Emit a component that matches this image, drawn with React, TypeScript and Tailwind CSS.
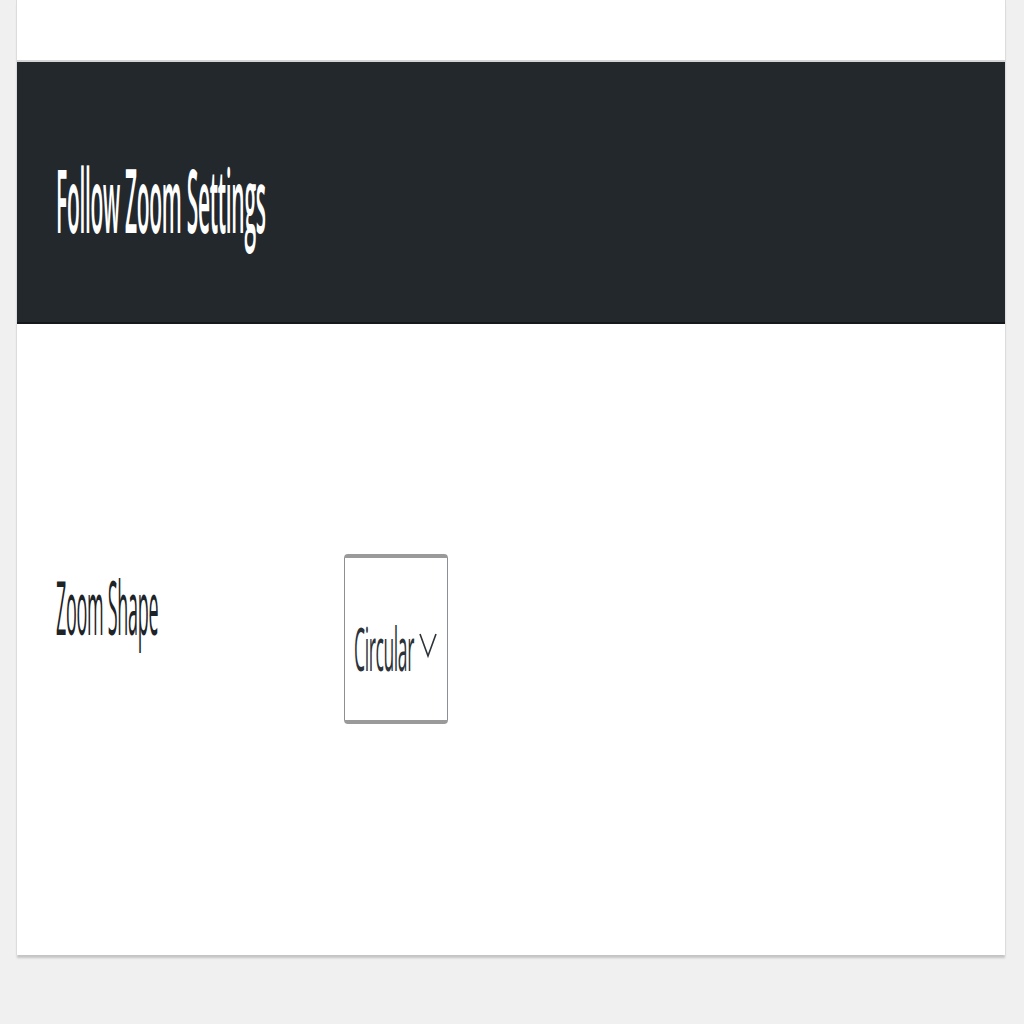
import React from "react";

export default function App() {
  return (
    <div className="min-h-[1024px] w-[1024px] bg-[#f0f0f1] font-['Open_Sans',sans-serif]">
      <div className="ml-[16px] w-[990px] bg-white border-l border-r border-[#dcdcde] shadow-[0_4px_2px_-1px_rgba(0,0,0,0.18)]">
        <div className="h-[62px] border-b-2 border-[#d5d5d5]"></div>
        <div className="h-[262px] bg-[#23282d] border-b-2 border-[#16191c] flex items-center pl-[39px] pt-[22px]">
          <span className="text-white text-[21px] font-semibold tracking-[-0.3px] inline-block scale-y-[4.2] origin-center">
            Follow Zoom Settings
          </span>
        </div>
        <div className="h-[631px] flex items-start pt-[230px]">
          <div className="w-[327px] pl-[39px] pt-[40px]">
            <span className="text-[#1d2327] text-[18px] tracking-[-0.3px] inline-block scale-y-[4.2] origin-center">
              Zoom Shape
            </span>
          </div>
          <div className="w-[104px] h-[170px] border border-[#8c8f94] border-t-[4px] border-b-[4px] border-t-[#9a9a9a] border-b-[#9a9a9a] rounded-[4px] flex items-center justify-center gap-[4px] pt-[16px]">
            <span className="text-[#2c3338] text-[17.5px] tracking-[-0.4px] inline-block scale-y-[3.4] origin-center">
              Circular
            </span>
            <svg width="20" height="30" viewBox="0 0 20 30" className="mt-[-4px]">
              <path d="M2 4 L10 26 L18 4" stroke="#2c3338" strokeWidth="1.6" fill="none" />
            </svg>
          </div>
        </div>
      </div>
    </div>
  );
}
